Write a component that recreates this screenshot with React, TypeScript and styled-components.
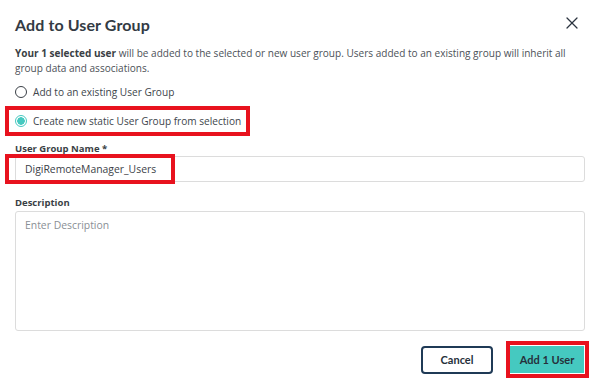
import React from "react";
import styled, { createGlobalStyle } from "styled-components";
import { X } from "lucide-react";

const GlobalStyle = createGlobalStyle`
  body {
    margin: 0;
    background: #fff;
    font-family: "Open Sans", "Noto Sans", sans-serif;
    color: #3c4148;
  }
`;

const App: React.FC = () => {
  const [choice, setChoice] = React.useState("new");
  const [name, setName] = React.useState("DigiRemoteManager_Users");
  const [desc, setDesc] = React.useState("");

  return (
    <Dialog>
      <GlobalStyle />
      <Header>
        <Title>Add to User Group</Title>
        <CloseButton aria-label="Close">
          <X size={20} strokeWidth={1.5} />
        </CloseButton>
      </Header>

      <Intro>
        <strong>Your 1 selected user</strong> will be added to the selected or new user group. Users added to an
        existing group will inherit all group data and associations.
      </Intro>

      <Options>
        <Option>
          <Radio checked={choice === "existing"} onClick={() => setChoice("existing")} />
          Add to an existing User Group
        </Option>
        <Highlight>
          <Option>
            <Radio checked={choice === "new"} onClick={() => setChoice("new")} />
            Create new static User Group from selection
          </Option>
        </Highlight>
      </Options>

      <Field gap={6}>
        <Label>User Group Name *</Label>
        <InputWrap>
          <Input value={name} onChange={({ target }: any) => setName(target.value)} />
          <Marker />
        </InputWrap>
      </Field>

      <Field gap={14}>
        <Label>Description</Label>
        <TextArea
          placeholder="Enter Description"
          value={desc}
          onChange={({ target }: any) => setDesc(target.value)}
        />
      </Field>

      <Footer>
        <Button>Cancel</Button>
        <PrimaryWrap>
          <Button primary>Add 1 User</Button>
        </PrimaryWrap>
      </Footer>
    </Dialog>
  );
};

export default App;

const Dialog = styled.div`
  width: 600px;
  height: 384px;
  box-sizing: border-box;
  padding: 0 15px;
  display: flex;
  flex-direction: column;
`;

const Header = styled.div`
  display: flex;
  align-items: center;
  justify-content: space-between;
  height: 46px;
  box-sizing: border-box;
  padding-top: 3px;
`;

const Title = styled.h1`
  margin: 0;
  font-family: "Lato", sans-serif;
  font-weight: 700;
  font-size: 16px;
  color: #333b44;
  letter-spacing: 0.1px;
`;

const CloseButton = styled.button`
  border: 0;
  background: none;
  padding: 0;
  margin: -3px 3px 0 0;
  color: #2c3440;
  display: flex;
  cursor: pointer;
`;

const Intro = styled.p`
  margin: 0;
  font-size: 10.05px;
  line-height: 15px;
  color: #4c5158;

  strong {
    font-weight: 700;
    color: #3a3f45;
  }
`;

const Options = styled.div`
  display: flex;
  flex-direction: column;
  margin-top: 3px;
`;

const Option = styled.label`
  display: flex;
  align-items: center;
  gap: 6px;
  height: 26px;
  font-size: 10.1px;
  color: #40454c;
  white-space: nowrap;
`;

const Radio = styled.span<{ checked: boolean }>`
  flex: none;
  width: 12px;
  height: 12px;
  border-radius: 50%;
  box-sizing: border-box;
  border: 1.5px solid ${(p) => (p.checked ? "#45c9c0" : "#3a3f46")};
  background: ${(p) => (p.checked ? "radial-gradient(circle, #45c9c0 0 3.5px, #fff 4px)" : "#fff")};
  cursor: pointer;
`;

const Highlight = styled.div`
  margin: 1px 0 0 -10px;
  width: 245px;
  height: 30px;
  box-sizing: border-box;
  border: 4px solid #e8121e;
  padding-left: 6px;
  display: flex;
  align-items: center;
`;

const Field = styled.div<{ gap: number }>`
  display: flex;
  flex-direction: column;
  margin-top: ${(p) => p.gap}px;
`;

const Label = styled.div`
  font-size: 9.5px;
  font-weight: 700;
  color: #3a3f45;
  line-height: 14px;
  margin-bottom: 0;
`;

const InputWrap = styled.div`
  position: relative;
`;

const Input = styled.input`
  width: 100%;
  height: 26px;
  box-sizing: border-box;
  border: 1px solid #dcdcdc;
  border-radius: 3px;
  padding: 0 9px;
  font-family: "Open Sans", "Noto Sans", sans-serif;
  font-size: 10.4px;
  color: #3c4148;

  &:focus-visible {
    outline: none;
  }
`;

const Marker = styled.span`
  position: absolute;
  left: -10px;
  top: -2px;
  width: 170px;
  height: 30px;
  box-sizing: border-box;
  border: 4px solid #e8121e;
  pointer-events: none;
`;

const TextArea = styled.textarea`
  height: 120px;
  margin-top: 1px;
  box-sizing: border-box;
  border: 1px solid #dcdcdc;
  border-radius: 3px;
  padding: 6px 9px;
  resize: none;
  font-family: "Open Sans", "Noto Sans", sans-serif;
  font-size: 10.4px;
  color: #3c4148;

  &::placeholder {
    color: #8a8f96;
  }

  &:focus-visible {
    outline: none;
  }
`;

const Footer = styled.div`
  display: flex;
  justify-content: flex-end;
  align-items: center;
  gap: 13px;
  margin-top: 10px;
  margin-right: -4px;
`;

const PrimaryWrap = styled.div`
  border: 4px solid #e8121e;
  padding: 1px 1px 1px 0;
  display: flex;
`;

const Button = styled.button<{ primary?: boolean }>`
  height: ${(p) => (p.primary ? "27px" : "28px")};
  width: ${(p) => (p.primary ? "74px" : "72px")};
  box-sizing: border-box;
  border-radius: ${(p) => (p.primary ? "0" : "4px")};
  border: ${(p) => (p.primary ? "0" : "2px solid #1f3a56")};
  background: ${(p) => (p.primary ? "#45c9c0" : "#fff")};
  font-family: "Lato", sans-serif;
  font-weight: 700;
  font-size: 11px;
  color: #26303b;
  cursor: pointer;
`;
